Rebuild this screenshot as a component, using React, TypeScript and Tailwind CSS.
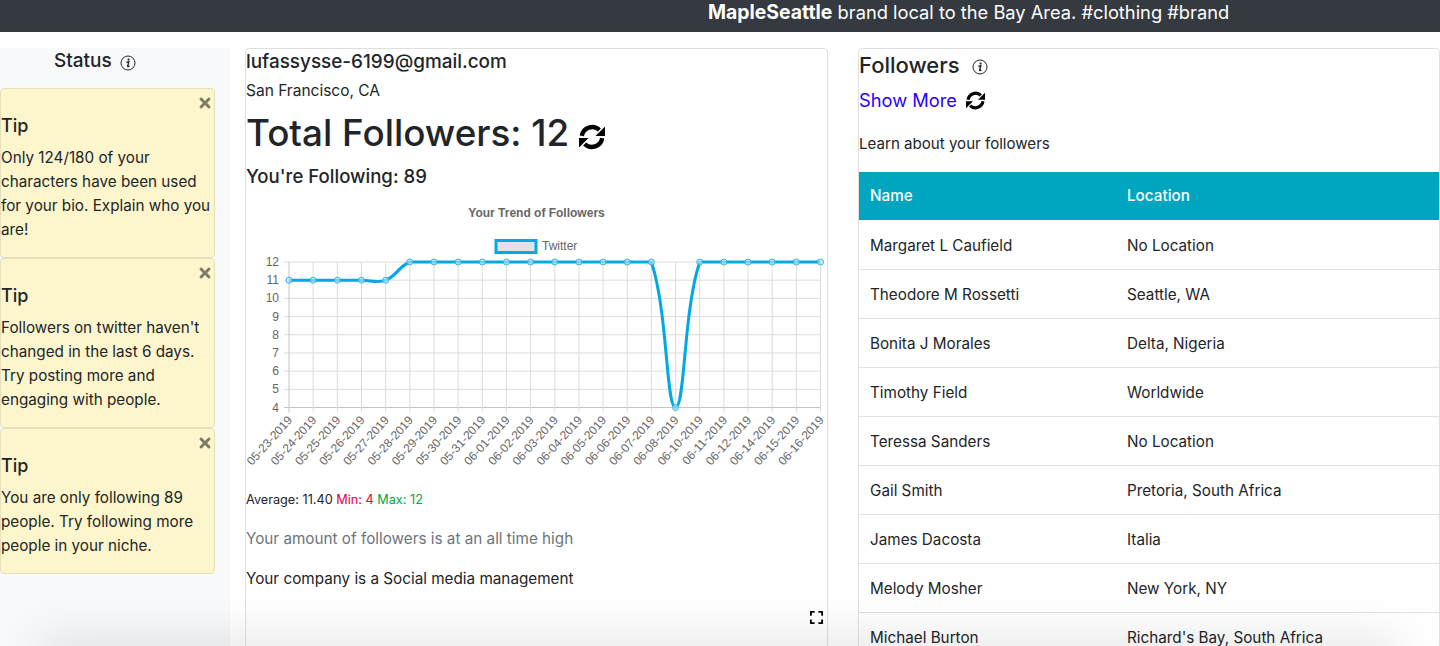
import { FaTimes, FaExpand } from 'react-icons/fa'

const tips = [
  { text: 'Only 124/180 of your characters have been used for your bio. Explain who you are!', cls: 'h-[170px]' },
  { text: "Followers on twitter haven't changed in the last 6 days. Try posting more and engaging with people.", cls: 'h-[170px]' },
  { text: 'You are only following 89 people. Try following more people in your niche.', cls: 'h-[146px]' },
]

const followers = [
  ['Margaret L Caufield', 'No Location'],
  ['Theodore M Rossetti', 'Seattle, WA'],
  ['Bonita J Morales', 'Delta, Nigeria'],
  ['Timothy Field', 'Worldwide'],
  ['Teressa Sanders', 'No Location'],
  ['Gail Smith', 'Pretoria, South Africa'],
  ['James Dacosta', 'Italia'],
  ['Melody Mosher', 'New York, NY'],
  ['Michael Burton', "Richard's Bay, South Africa"],
]

const dates = [
  '05-23-2019', '05-24-2019', '05-25-2019', '05-26-2019', '05-27-2019', '05-28-2019',
  '05-29-2019', '05-30-2019', '05-31-2019', '06-01-2019', '06-02-2019', '06-03-2019',
  '06-04-2019', '06-05-2019', '06-06-2019', '06-07-2019', '06-08-2019', '06-10-2019',
  '06-11-2019', '06-12-2019', '06-14-2019', '06-15-2019', '06-16-2019',
]
const values = [11, 11, 11, 11, 11, 12, 12, 12, 12, 12, 12, 12, 12, 12, 12, 12, 4, 12, 12, 12, 12, 12, 12]

const LEFT = 289
const RIGHT = 820.5
const TOP = 262
const BOTTOM = 407.5
const xAt = (i: number) => LEFT + (i * (RIGHT - LEFT)) / (dates.length - 1)
const yAt = (v: number) => TOP + ((12 - v) * (BOTTOM - TOP)) / 8
const clampY = (y: number) => Math.min(BOTTOM, Math.max(TOP, y))

// same bezier tension as chart.js line charts (0.4), capped to the plot area
function linePath() {
  const pts = values.map((v, i) => ({ x: xAt(i), y: yAt(v) }))
  const ctrl = pts.map((p, i) => {
    const prev = pts[i - 1] ?? p
    const next = pts[i + 1] ?? p
    const d01 = Math.hypot(p.x - prev.x, p.y - prev.y)
    const d12 = Math.hypot(next.x - p.x, next.y - p.y)
    const total = d01 + d12 || 1
    const fa = (0.4 * d01) / total
    const fb = (0.4 * d12) / total
    return {
      inX: p.x - fa * (next.x - prev.x),
      inY: clampY(p.y - fa * (next.y - prev.y)),
      outX: p.x + fb * (next.x - prev.x),
      outY: clampY(p.y + fb * (next.y - prev.y)),
    }
  })
  let d = `M${pts[0].x} ${pts[0].y}`
  for (let i = 1; i < pts.length; i++) {
    d += ` C${ctrl[i - 1].outX} ${ctrl[i - 1].outY} ${ctrl[i].inX} ${ctrl[i].inY} ${pts[i].x} ${pts[i].y}`
  }
  return d
}

function InfoIcon() {
  return (
    <svg width="16" height="16" viewBox="0 0 16 16" className="shrink-0">
      <circle cx="8" cy="8" r="7" fill="none" stroke="#212529" strokeWidth="1" />
      <circle cx="8.6" cy="4.6" r="1.1" fill="#212529" />
      <path d="M6.4 7.2 L8.8 6.9 L7.7 11 Q7.6 11.7 8.2 11.5 L9.4 10.9" fill="none" stroke="#212529" strokeWidth="1.4" />
    </svg>
  )
}

function SyncIcon({ size }: { size: number }) {
  return (
    <svg width={size} height={size} viewBox="0 0 24 24" className="shrink-0">
      <g>
        <path d="M2.6 11 A9.6 9.6 0 0 1 18.8 5.6" fill="none" stroke="#000" strokeWidth="4" />
        <path d="M24 2.2 V11 H15.2 Z" fill="#000" />
      </g>
      <g transform="rotate(180 12 12)">
        <path d="M2.6 11 A9.6 9.6 0 0 1 18.8 5.6" fill="none" stroke="#000" strokeWidth="4" />
        <path d="M24 2.2 V11 H15.2 Z" fill="#000" />
      </g>
    </svg>
  )
}

function TrendChart() {
  const font = '"Liberation Sans", Arial, sans-serif'
  return (
    <svg width="581" height="285" viewBox="246 200 581 285" className="mt-[12px] block overflow-visible" style={{ fontFamily: font }}>
      <text x="536.5" y="217" textAnchor="middle" fontSize="12" fontWeight="700" fill="#666">Your Trend of Followers</text>
      <rect x="496" y="240.5" width="40" height="12" fill="#e2e2e2" stroke="#00a9e6" strokeWidth="3" />
      <text x="542" y="250" fontSize="12" fill="#666">Twitter</text>

      {[12, 11, 10, 9, 8, 7, 6, 5, 4].map(v => (
        <g key={v}>
          <line x1={LEFT - 5} x2={RIGHT} y1={yAt(v)} y2={yAt(v)} stroke={v === 4 ? '#c4c4c4' : '#dcdcdc'} />
          <text x={LEFT - 10} y={yAt(v) + 4} textAnchor="end" fontSize="12" fill="#666">{v}</text>
        </g>
      ))}
      {dates.map((d, i) => (
        <g key={d}>
          <line x1={xAt(i)} x2={xAt(i)} y1={TOP} y2={BOTTOM + 5} stroke={i === 0 ? '#c4c4c4' : '#dcdcdc'} />
          <text
            transform={`translate(${xAt(i) + 4} ${BOTTOM + 13}) rotate(-48)`}
            textAnchor="end"
            fontSize="12"
            fill="#666"
          >
            {d}
          </text>
        </g>
      ))}

      <path d={linePath()} fill="none" stroke="#00a9e6" strokeWidth="3" />
      {values.map((v, i) => (
        <circle key={i} cx={xAt(i)} cy={yAt(v)} r="3" fill="#c8e8f5" fillOpacity="0.6" stroke="#35b4e4" strokeWidth="1" />
      ))}
    </svg>
  )
}

export default function App() {
  return (
    <div
      className="relative h-[646px] w-[1440px] overflow-hidden bg-white text-[#212529]"
      style={{ fontFamily: 'Inter, "Noto Sans", sans-serif' }}
    >
      <div className="flex h-8 items-center bg-[#343a40] pb-[6px] pl-[708px] text-[18.3px] text-white">
        <span><b className="text-[19.4px] font-bold">MapleSeattle</b> brand local to the Bay Area. #clothing #brand</span>
      </div>

      <div className="mt-4 flex items-start">
        {/* Status column */}
        <div className="h-[598px] w-[230px] shrink-0 bg-[#f8f9fa] pr-[15px]">
          <div className="flex h-10 items-start gap-[8px] pl-[54px] pt-px text-[19px] font-medium leading-[24px]">
            <span>Status</span>
            <span className="mt-[6px]"><InfoIcon /></span>
          </div>
          {tips.map(t => (
            <div key={t.text} className={`relative rounded border border-[#e6dfbb] bg-[#fdf5cc] pt-[25px] ${t.cls}`}>
              <FaTimes className="absolute right-[1px] top-[6px] text-[#7d7a66]" size={16} />
              <div className="text-[18px] font-medium leading-[24px]">Tip</div>
              <p className="mt-[8px] text-[15.25px] leading-[24px]">{t.text}</p>
            </div>
          ))}
        </div>

        {/* Profile column */}
        <div className="relative ml-[15px] h-[620px] w-[583px] shrink-0 rounded border border-[#dfdfdf]">
          <div className="pt-px text-[18.9px] font-medium leading-[24px]">lufassysse-6199@gmail.com</div>
          <div className="mt-[5px] text-[15.5px] leading-[24px]">San Francisco, CA</div>
          <div className="flex items-center gap-[10px] text-[36.8px] font-medium leading-[60px]">
            <span>Total Followers: 12</span>
            <span className="mt-[7px]"><SyncIcon size={26} /></span>
          </div>
          <div className="mt-[1px] text-[18.6px] font-medium leading-[24px]">You're Following: 89</div>
          <TrendChart />
          <div className="mt-[7px] text-[12.7px] leading-[16px]">
            Average: 11.40 <span className="text-[#e8003d]">Min: 4</span>{' '}
            <span className="text-[#00a83c]">Max: 12</span>
          </div>
          <p className="mt-[19px] text-[15.27px] leading-[24px] text-[#6c757d]">Your amount of followers is at an all time high</p>
          <p className="mt-[16px] text-[15.27px] leading-[24px]">Your company is a Social media management</p>
          <FaExpand className="absolute left-[563px] top-[561px] text-black" size={15} />
        </div>

        {/* Followers column */}
        <div className="ml-[30px] h-[620px] w-[582px] shrink-0 rounded border border-[#dfdfdf]">
          <div className="flex items-center gap-[12px] pt-[2px] text-[22px] font-medium leading-[28px]">
            <span>Followers</span>
            <span className="mt-[3px]"><InfoIcon /></span>
          </div>
          <div className="mt-[7px] flex items-center gap-[9px] text-[18.3px] leading-[28px] text-[#2b00ff]">
            <span>Show More</span>
            <SyncIcon size={19} />
          </div>
          <p className="mt-[18px] text-[15.1px] leading-[24px]">Learn about your followers</p>
          <div className="mb-px mt-[16px] grid h-[48px] grid-cols-[257px_1fr] items-center bg-[#00a5bf] pl-[11px] pt-[1px] text-[15.25px] font-medium text-white">
            <span>Name</span>
            <span>Location</span>
          </div>
          {followers.map(([name, loc]) => (
            <div key={name} className="grid h-[49px] grid-cols-[257px_1fr] items-center border-b border-[#dee2e6] pl-[11px] pt-[2px] text-[15.25px]">
              <span>{name}</span>
              <span>{loc}</span>
            </div>
          ))}
        </div>
      </div>

      {/* window shadow along the bottom edge, fades out near the corners */}
      <div className="pointer-events-none absolute inset-x-[40px] -bottom-[20px] h-5 shadow-[0_0_50px_rgba(0,0,0,0.2)]" />
    </div>
  )
}
